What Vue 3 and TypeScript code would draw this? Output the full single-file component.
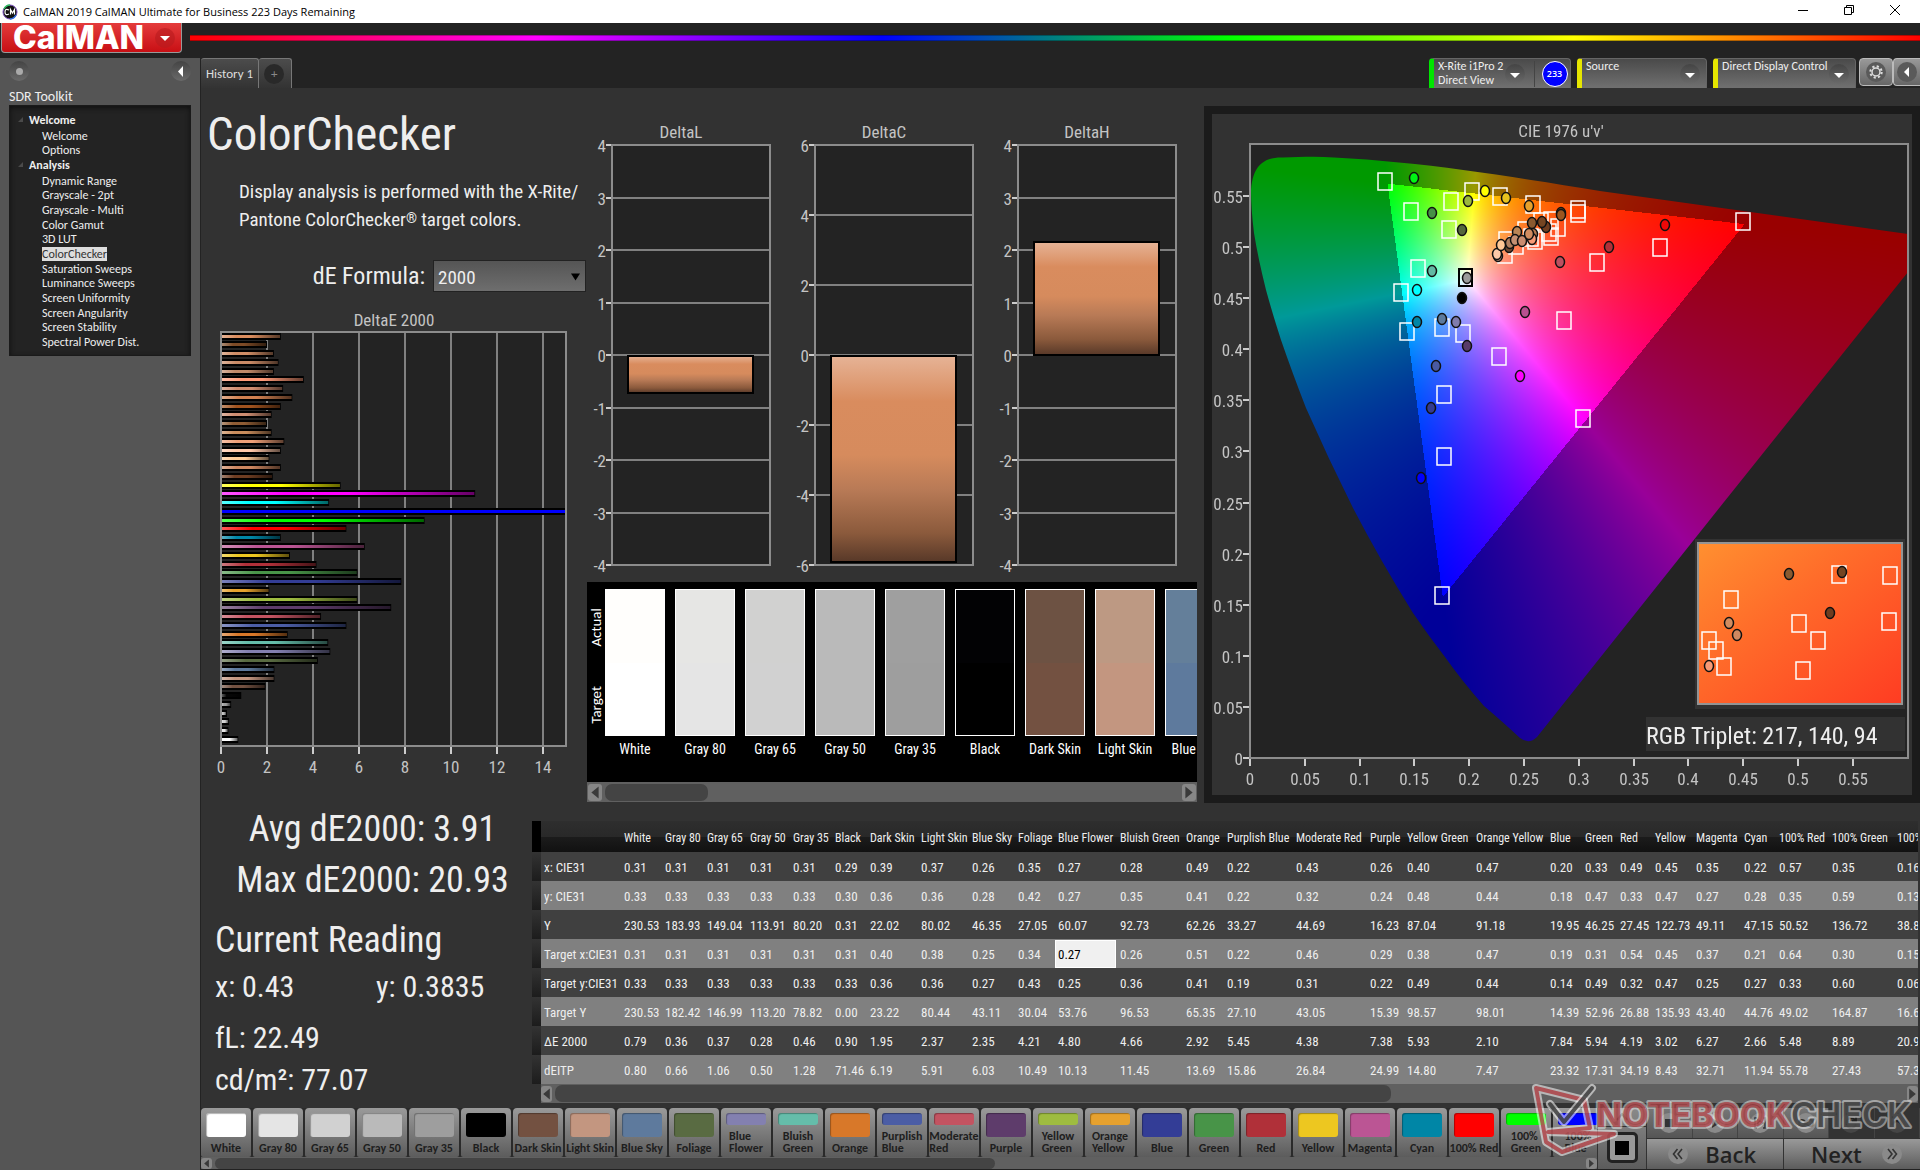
<script setup lang="ts">
import { onMounted, ref } from 'vue'

interface TreeItem { label: string; group?: boolean; active?: boolean }
interface Patch { name: string; color: string; actual?: string }
interface Dot { x: number; y: number; c: string }
interface DeltaChart { title: string; left: number; max: number; step: number; value: number }

const tree: TreeItem[] = [
  { label: 'Welcome', group: true },
  { label: 'Welcome' },
  { label: 'Options' },
  { label: 'Analysis', group: true },
  { label: 'Dynamic Range' },
  { label: 'Grayscale - 2pt' },
  { label: 'Grayscale - Multi' },
  { label: 'Color Gamut' },
  { label: '3D LUT' },
  { label: 'ColorChecker', active: true },
  { label: 'Saturation Sweeps' },
  { label: 'Luminance Sweeps' },
  { label: 'Screen Uniformity' },
  { label: 'Screen Angularity' },
  { label: 'Screen Stability' },
  { label: 'Spectral Power Dist.' },
]

const patches: Patch[] = [
  { name: 'White', color: '#ffffff', actual: '#fffefc' },
  { name: 'Gray 80', color: '#e5e5e5', actual: '#e6e6e4' },
  { name: 'Gray 65', color: '#d1d1d1', actual: '#d1d1d0' },
  { name: 'Gray 50', color: '#bababa', actual: '#bababa' },
  { name: 'Gray 35', color: '#9e9e9e', actual: '#9f9f9f' },
  { name: 'Black', color: '#000000', actual: '#020204' },
  { name: 'Dark Skin', color: '#735141', actual: '#6d5243' },
  { name: 'Light Skin', color: '#c39680', actual: '#bd9983' },
  { name: 'Blue Sky', color: '#5e7a9d', actual: '#647f9a' },
  { name: 'Foliage', color: '#596b42' },
  { name: 'Blue Flower', color: '#8380b0' },
  { name: 'Bluish Green', color: '#65bdaa' },
  { name: 'Orange', color: '#d87829' },
  { name: 'Purplish Blue', color: '#4b5da5' },
  { name: 'Moderate Red', color: '#c35361' },
  { name: 'Purple', color: '#5e3c6b' },
  { name: 'Yellow Green', color: '#9ebc40' },
  { name: 'Orange Yellow', color: '#e6a12e' },
  { name: 'Blue', color: '#333d96' },
  { name: 'Green', color: '#489448' },
  { name: 'Red', color: '#b03039' },
  { name: 'Yellow', color: '#edc720' },
  { name: 'Magenta', color: '#bb5594' },
  { name: 'Cyan', color: '#0086a6' },
  { name: '100% Red', color: '#ff0000' },
  { name: '100% Green', color: '#00ff00' },
  { name: '100% Blue', color: '#0000ff' },
]
const twoLine = ['Blue Flower', 'Bluish Green', 'Purplish Blue', 'Moderate Red', 'Yellow Green', 'Orange Yellow', '100% Green', '100% Blue']
const comparison = patches.slice(0, 9)

const columnWidths = [79, 41, 42, 43, 43, 42, 35, 51, 51, 46, 40, 62, 66, 41, 69, 74, 37, 69, 74, 35, 35, 35, 41, 48, 35, 53, 65, 65]
const rows: { label: string; cells: string[] }[] = [
  { label: 'x: CIE31', cells: '0.31 0.31 0.31 0.31 0.31 0.29 0.39 0.37 0.26 0.35 0.27 0.28 0.49 0.22 0.43 0.26 0.40 0.47 0.20 0.33 0.49 0.45 0.35 0.22 0.57 0.35 0.16'.split(' ') },
  { label: 'y: CIE31', cells: '0.33 0.33 0.33 0.33 0.33 0.30 0.36 0.36 0.28 0.42 0.27 0.35 0.41 0.22 0.32 0.24 0.48 0.44 0.18 0.47 0.33 0.47 0.27 0.28 0.35 0.59 0.13'.split(' ') },
  { label: 'Y', cells: '230.53 183.93 149.04 113.91 80.20 0.31 22.02 80.02 46.35 27.05 60.07 92.73 62.26 33.27 44.69 16.23 87.04 91.18 19.95 46.25 27.45 122.73 49.11 47.15 50.52 136.72 38.8'.split(' ') },
  { label: 'Target x:CIE31', cells: '0.31 0.31 0.31 0.31 0.31 0.31 0.40 0.38 0.25 0.34 0.27 0.26 0.51 0.22 0.46 0.29 0.38 0.47 0.19 0.31 0.54 0.45 0.37 0.21 0.64 0.30 0.15'.split(' ') },
  { label: 'Target y:CIE31', cells: '0.33 0.33 0.33 0.33 0.33 0.33 0.36 0.36 0.27 0.43 0.25 0.36 0.41 0.19 0.31 0.22 0.49 0.44 0.14 0.49 0.32 0.47 0.25 0.27 0.33 0.60 0.06'.split(' ') },
  { label: 'Target Y', cells: '230.53 182.42 146.99 113.20 78.82 0.00 23.22 80.44 43.11 30.04 53.76 96.53 65.35 27.10 43.05 15.39 98.57 98.01 14.39 52.96 26.88 135.93 43.40 44.76 49.02 164.87 16.6'.split(' ') },
  { label: 'ΔE 2000', cells: '0.79 0.36 0.37 0.28 0.46 0.90 1.95 2.37 2.35 4.21 4.80 4.66 2.92 5.45 4.38 7.38 5.93 2.10 7.84 5.94 4.19 3.02 6.27 2.66 5.48 8.89 20.93'.split(' ') },
  { label: 'dEITP', cells: '0.80 0.66 1.06 0.50 1.28 71.46 6.19 5.91 6.03 10.49 10.13 11.45 13.69 15.86 26.84 24.99 14.80 7.47 23.32 17.31 34.19 8.43 32.71 11.94 55.78 27.43 57.3'.split(' ') },
]
const isEditing = (r: number, c: number) => r === 3 && c === 10

// ΔE bars, listed from the top of the chart to the bottom
const deltaE: [number, string][] = [
  [2.6, '#d98c5e'], [2.0, '#7d4a26'], [2.3, '#cf8d66'], [2.5, '#c98a66'], [2.3, '#c08a6a'], [3.6, '#ff9a78'],
  [2.7, '#d08c70'], [3.1, '#d08050'], [2.6, '#a0521e'], [2.2, '#cf8e72'], [2.0, '#8f5c34'], [2.2, '#c88c5c'],
  [2.75, '#f0a078'], [2.6, '#ffc8aa'], [2.1, '#ffcc9a'], [2.6, '#cc8660'], [2.25, '#6e3d22'],
  [5.2, '#ffff00'], [11.05, '#ff00ff'], [4.7, '#00ffff'], [15, '#0000ff'], [8.85, '#00ff00'], [5.45, '#ff0000'],
  [2.6, '#0086a6'], [6.25, '#bb5594'], [3.0, '#edc720'], [4.15, '#b03039'], [5.93, '#489448'], [7.84, '#333d96'],
  [2.1, '#e6a12e'], [5.93, '#9ebc40'], [7.4, '#5e3c6b'], [4.35, '#c35361'], [5.45, '#4b5da5'], [2.9, '#d87829'],
  [4.66, '#65bdaa'], [4.75, '#8380b0'], [4.21, '#596b42'], [2.32, '#5e7a9d'], [2.32, '#c39680'], [1.93, '#735141'],
  [0.88, '#060606'], [0.44, '#9e9e9e'], [0.26, '#bababa'], [0.35, '#d1d1d1'], [0.32, '#e5e5e5'], [0.75, '#ffffff'],
]
const barTop = (i: number) => Math.floor(333 + i * 8.77)

const deltas: DeltaChart[] = [
  { title: 'DeltaL', left: 612, max: 4, step: 1, value: -0.72 },
  { title: 'DeltaC', left: 815, max: 6, step: 2, value: -5.92 },
  { title: 'DeltaH', left: 1018, max: 4, step: 1, value: 2.18 },
]
const ticksOf = (d: DeltaChart) => {
  const out: number[] = []
  for (let v = d.max; v >= -d.max; v -= d.step) out.push(v)
  return out
}
const yOf = (d: DeltaChart, v: number) => Math.round(355 - (v / d.max) * 210)

const axis = Array.from({ length: 12 }, (_, i) => i * 0.05)
const fmt = (v: number) => String(Number(v.toFixed(2)))
const uX = (u: number) => Math.round(1250 + u * 1096)
const vY = (v: number) => Math.round(758 - v * 1022)

const targets: [number, number][] = [
  [1385, 181], [1411, 211], [1451, 201], [1472, 191], [1449, 229], [1500, 196], [1533, 204], [1578, 209], [1578, 213],
  [1418, 268], [1401, 292], [1407, 331], [1442, 327], [1463, 333], [1499, 356], [1444, 394], [1444, 456],
  [1583, 418], [1564, 320], [1597, 262], [1660, 247], [1743, 221], [1442, 595],
  [1506, 240], [1505, 254], [1516, 245], [1525, 230], [1531, 237], [1535, 240], [1541, 221], [1549, 232], [1551, 236], [1551, 220], [1558, 227],
]
const readings: Dot[] = [
  { x: 1414, y: 178, c: '#00f514' }, { x: 1485, y: 191, c: '#ffff00' }, { x: 1506, y: 198, c: '#e8c41e' },
  { x: 1468, y: 201, c: '#9bb83c' }, { x: 1432, y: 213, c: '#469046' }, { x: 1462, y: 230, c: '#54683c' },
  { x: 1432, y: 271, c: '#62baa4' }, { x: 1417, y: 290, c: '#00ffff' }, { x: 1417, y: 322, c: '#0086a6' },
  { x: 1442, y: 319, c: '#5c7a9c' }, { x: 1456, y: 322, c: '#807cae' }, { x: 1462, y: 298, c: '#000000' },
  { x: 1467, y: 346, c: '#5a3c68' }, { x: 1436, y: 366, c: '#4a5aa2' }, { x: 1431, y: 408, c: '#343c90' },
  { x: 1421, y: 478, c: '#0000ff' }, { x: 1520, y: 376, c: '#ff00ff' }, { x: 1525, y: 312, c: '#b85090' },
  { x: 1665, y: 225, c: '#f00808' }, { x: 1609, y: 247, c: '#b03038' }, { x: 1560, y: 262, c: '#bc5060' },
  { x: 1529, y: 206, c: '#e6a12c' }, { x: 1498, y: 256, c: '#c9957a' }, { x: 1497, y: 254, c: '#ffc9a8' },
  { x: 1509, y: 247, c: '#6a452e' }, { x: 1501, y: 245, c: '#ffc896' }, { x: 1510, y: 243, c: '#b0805f' },
  { x: 1517, y: 232, c: '#b98556' }, { x: 1515, y: 240, c: '#c48f72' }, { x: 1522, y: 241, c: '#c98c70' },
  { x: 1533, y: 234, c: '#b87a50' }, { x: 1532, y: 239, c: '#f79a76' }, { x: 1529, y: 234, c: '#d18c60' },
  { x: 1532, y: 223, c: '#8a5a30' }, { x: 1546, y: 227, c: '#6e3d20' }, { x: 1542, y: 222, c: '#744522' },
  { x: 1561, y: 213, c: '#7a4a20' }, { x: 1561, y: 215, c: '#9c5620' },
]
const insetTargets: [number, number][] = [
  [1839, 574], [1890, 575], [1731, 599], [1799, 623], [1889, 621], [1709, 640], [1716, 650], [1724, 666], [1818, 640], [1803, 670],
]
const insetReadings: Dot[] = [
  { x: 1789, y: 574, c: '#8a5a30' }, { x: 1842, y: 572, c: '#744522' }, { x: 1830, y: 613, c: '#6e3d20' },
  { x: 1729, y: 623, c: '#d18c60' }, { x: 1737, y: 635, c: '#d08860' }, { x: 1709, y: 666, c: '#f79a76' },
]

const locus = ref<HTMLCanvasElement | null>(null)

// Chromaticity diagram: every pixel takes the brightest colour of its u'v' point;
// points outside the Rec.709 triangle are shown dimmed.
function paintLocus(canvas: HTMLCanvasElement) {
  const ox = 1212, oy = 114
  const ctx = canvas.getContext('2d')
  if (!ctx) return
  const w = canvas.width, h = canvas.height
  const layer = document.createElement('canvas')
  layer.width = w
  layer.height = h
  const lctx = layer.getContext('2d')
  if (!lctx) return
  const img = lctx.createImageData(w, h)
  for (let y = 0; y < h; y++) {
    for (let x = 0; x < w; x++) {
      const u = (x + ox - 1250) / 1096
      const v = Math.max(0.005, (758 - (y + oy)) / 1022)
      const X = (9 * u) / (4 * v)
      const Z = (12 - 3 * u - 20 * v) / (4 * v)
      let r = 3.2406 * X - 1.5372 - 0.4986 * Z
      let g = -0.9689 * X + 1.8758 + 0.0415 * Z
      let b = 0.0557 * X - 0.204 + 1.057 * Z
      const outside = Math.min(r, g, b) < 0
      r = Math.max(0, r)
      g = Math.max(0, g)
      b = Math.max(0, b)
      const m = Math.max(r, g, b) || 1
      const k = outside ? 153 : 255
      const i = (y * w + x) * 4
      img.data[i] = (r / m) * k
      img.data[i + 1] = (g / m) * k
      img.data[i + 2] = (b / m) * k
      img.data[i + 3] = 255
    }
  }
  lctx.putImageData(img, 0, 0)
  ctx.fillStyle = '#232323'
  ctx.fillRect(38, 30, 658, 614)
  ctx.save()
  ctx.beginPath()
  ctx.rect(38, 30, 658, 614)
  ctx.clip()
  ctx.clip(new Path2D('M39 76C41 52 51 43 71 43.500C88 43 104 42 122 43.500C210 48 290 61 388 77L696 120V158L512 388L325 623Q317 631 308 624Q292 609 272 592Q250 567 233 543Q216 521 201 499Q168 446 141 394Q116 344 94 294Q80 258 69 226Q60 198 54 176Q46 144 42 119Q39 95 39 76Z'))
  ctx.drawImage(layer, 0, 0)
  ctx.restore()
}
onMounted(() => { if (locus.value) paintLocus(locus.value) })
</script>

<template>
  <div class="app">
    <header class="titlebar">
      <svg class="app-icon" viewBox="0 0 16 16" aria-hidden="true">
        <circle cx="8" cy="8" r="7" fill="#111" stroke="#7a4fc0" stroke-width="1" />
        <path d="M2 5A7 7 0 0 1 8 1" stroke="#2fc060" stroke-width="1.500" fill="none" />
        <path d="M14 11A7 7 0 0 1 8 15" stroke="#3070e0" stroke-width="1.500" fill="none" />
        <path d="M7 6Q3 4 3 8T7 10M8.500 10.500V5.500L10.500 9L12.500 5.500V10.500" stroke="#fff" stroke-width="1.200" fill="none" />
      </svg>
      <span class="window-title">CalMAN 2019 CalMAN Ultimate for Business 223 Days Remaining</span>
      <div class="window-buttons">
        <button type="button" aria-label="Minimize"><svg viewBox="0 0 12 12"><path d="M1 6.500H11" /></svg></button>
        <button type="button" aria-label="Restore"><svg viewBox="0 0 12 12"><path d="M1.500 3.500H8.500V10.500H1.500ZM3.500 3.500V1.500H10.500V8.500H8.500" /></svg></button>
        <button type="button" aria-label="Close"><svg viewBox="0 0 12 12"><path d="M1 1L11 11M11 1L1 11" /></svg></button>
      </div>
    </header>

    <div class="brandbar">
      <button type="button" class="logo">
        <span>CalMAN</span>
        <svg viewBox="0 0 20 20" aria-hidden="true"><circle cx="10" cy="10" r="10" fill="#b81a1e" opacity=".6" /><path d="M5 8H15L10 13Z" fill="#fff" /></svg>
      </button>
      <div class="rainbow"></div>
    </div>

    <div class="shell">
      <aside class="sidebar">
        <div class="side-top">
          <button type="button" class="knob" aria-label="Pin"><i></i></button>
          <button type="button" class="knob" aria-label="Collapse"><svg viewBox="0 0 20 20"><path d="M12 5V16L7 10.500Z" fill="#fff" /></svg></button>
        </div>
        <h2>SDR Toolkit</h2>
        <ul class="tree">
          <li v-for="(t, i) in tree" :key="i" :class="{ group: t.group }">
            <svg v-if="t.group" viewBox="0 0 6 6" aria-hidden="true"><path d="M5 0V5H0Z" fill="#4a4a4a" /></svg>
            <a href="#" :class="{ active: t.active }">{{ t.label }}</a>
          </li>
        </ul>
      </aside>

      <main class="main">
        <div class="strip">
          <div class="tabs">
            <button type="button" class="tab">History 1</button>
            <button type="button" class="tab add" aria-label="Add history"><span>+</span></button>
          </div>
          <div class="devices">
            <div class="device meter">
              <p>X-Rite i1Pro 2<br>Direct View</p>
              <button type="button" class="drop" aria-label="Meter menu"><svg viewBox="0 0 20 20"><path d="M5 9H15L10 14Z" fill="#fff" /></svg></button>
              <span class="count">233</span>
            </div>
            <div class="device source">
              <p>Source</p>
              <button type="button" class="drop" aria-label="Source menu"><svg viewBox="0 0 20 20"><path d="M5 9H15L10 14Z" fill="#fff" /></svg></button>
            </div>
            <div class="device display">
              <p>Direct Display Control</p>
              <button type="button" class="drop" aria-label="Display menu"><svg viewBox="0 0 20 20"><path d="M5 9H15L10 14Z" fill="#fff" /></svg></button>
            </div>
            <button type="button" class="tool" aria-label="Settings">
              <svg viewBox="0 0 20 20"><circle cx="10" cy="10" r="10" fill="#5a5a5a" /><circle cx="10" cy="10" r="4" fill="none" stroke="#ddd" stroke-width="1.500" /><circle cx="10" cy="10" r="5.700" fill="none" stroke="#ddd" stroke-width="2" stroke-dasharray="2.200 2.277" /></svg>
            </button>
            <button type="button" class="tool" aria-label="Hide panel">
              <svg viewBox="0 0 20 20"><circle cx="10" cy="10" r="10" fill="#5a5a5a" /><path d="M12 5V15L7 10Z" fill="#fff" /></svg>
            </button>
          </div>
        </div>

        <div class="upper">
          <section class="intro">
            <h1>ColorChecker</h1>
            <p>Display analysis is performed with the X-Rite/<br>Pantone ColorChecker<sup>®</sup> target colors.</p>
            <div class="formula">
              <label for="formula">dE Formula:</label>
              <div class="select">
                <select id="formula"><option>2000</option></select>
                <svg viewBox="0 0 10 8" aria-hidden="true"><path d="M0 0H10L5 8Z" /></svg>
              </div>
            </div>
            <svg class="chart" viewBox="201 300 386 490" role="img" aria-label="DeltaE 2000">
              <defs>
                <linearGradient id="barShade" x1="0" x2="1" y1="0" y2="0">
                  <stop offset="0" stop-color="#fff" stop-opacity=".35" />
                  <stop offset=".25" stop-color="#fff" stop-opacity="0" />
                  <stop offset=".5" stop-color="#000" stop-opacity="0" />
                  <stop offset="1" stop-color="#000" stop-opacity=".6" />
                </linearGradient>
              </defs>
              <text x="394" y="326" text-anchor="middle" class="lab">DeltaE 2000</text>
              <rect x="221" y="332" width="345" height="414" fill="#232323" />
              <g v-for="n in 8" :key="n">
                <path :d="`M${221 + (n - 1) * 46} 332V746`" class="grid" />
                <path :d="`M${221 + (n - 1) * 46} 747V754`" class="tick" />
                <text :x="221 + (n - 1) * 46" y="773" text-anchor="middle" class="lab">{{ (n - 1) * 2 }}</text>
              </g>
              <g v-for="(b, i) in deltaE" :key="i">
                <rect x="221" :y="barTop(i)" :width="b[0] * 23" height="7" fill="#000" />
                <rect x="222" :y="barTop(i) + 2" :width="b[0] * 23 - 2" height="3" :fill="b[1]" />
                <rect x="222" :y="barTop(i) + 2" :width="b[0] * 23 - 2" height="3" :fill="i === 20 ? 'none' : 'url(#barShade)'" />
              </g>
              <rect x="221" y="332" width="345" height="414" class="frame" />
            </svg>
          </section>

          <section class="middle">
            <svg class="chart" viewBox="587 110 610 472" role="img" aria-label="DeltaL, DeltaC and DeltaH">
              <defs>
                <linearGradient id="skin" x1="0" x2="0" y1="0" y2="1">
                  <stop offset="0" stop-color="#e6b396" />
                  <stop offset=".22" stop-color="#d98c5e" />
                  <stop offset=".48" stop-color="#d68b5d" />
                  <stop offset=".65" stop-color="#b87a56" />
                  <stop offset=".86" stop-color="#8b5a3c" />
                  <stop offset="1" stop-color="#573828" />
                </linearGradient>
              </defs>
              <g v-for="d in deltas" :key="d.title">
                <text :x="d.left + 69" y="138" text-anchor="middle" class="lab">{{ d.title }}</text>
                <rect :x="d.left" y="145" width="158" height="420" fill="#232323" />
                <g v-for="t in ticksOf(d)" :key="t">
                  <path :d="`M${d.left} ${yOf(d, t)}h158`" class="grid" />
                  <path :d="`M${d.left - 6} ${yOf(d, t)}h6`" class="tick" />
                  <text :x="d.left - 6" :y="yOf(d, t) + 7" text-anchor="end" class="lab">{{ t }}</text>
                </g>
                <rect :x="d.left" y="145" width="158" height="420" class="frame" />
                <rect :x="d.left + 16" :y="Math.min(yOf(d, 0), yOf(d, d.value)) + 1" width="125" :height="Math.abs(yOf(d, 0) - yOf(d, d.value)) - 1" fill="url(#skin)" stroke="#000" stroke-width="2" />
              </g>
            </svg>
            <div class="compare">
              <div class="side-labels"><span>Actual</span><span>Target</span></div>
              <figure v-for="p in comparison" :key="p.name">
                <div class="pair"><i :style="{ background: p.actual }"></i><i :style="{ background: p.color }"></i></div>
                <figcaption>{{ p.name }}</figcaption>
              </figure>
            </div>
            <div class="scroll tall">
              <button type="button" aria-label="Scroll left"><svg viewBox="0 0 10 14"><path d="M8 2V12L2 7Z" /></svg></button>
              <span class="track"><i style="width: 18%"></i></span>
              <button type="button" aria-label="Scroll right"><svg viewBox="0 0 10 14"><path d="M2 2V12L8 7Z" /></svg></button>
            </div>
          </section>

          <section class="cie">
            <canvas ref="locus" width="700" height="681"></canvas>
            <svg viewBox="1212 114 700 681" role="img" aria-label="CIE 1976 u'v' chart">
              <defs>
                <linearGradient id="zoomed" x1="0" y1="0" x2="1" y2="1">
                  <stop offset="0" stop-color="#ff9030" />
                  <stop offset=".4" stop-color="#ff6c2a" />
                  <stop offset="1" stop-color="#ff3c22" />
                </linearGradient>
              </defs>
              <text x="1561" y="137" text-anchor="middle" class="lab">CIE 1976 u'v'</text>
              <rect x="1250" y="144" width="658" height="614" class="frame" />
              <g v-for="a in axis" :key="a">
                <path :d="`M${uX(a)} 759v7M1243 ${vY(a)}h6`" class="tick" />
                <text :x="uX(a)" y="785" text-anchor="middle" class="lab">{{ fmt(a) }}</text>
                <text x="1243" :y="vY(a) + 7" text-anchor="end" class="lab">{{ fmt(a) }}</text>
              </g>
              <rect v-for="(t, i) in targets" :key="'t' + i" :x="t[0] - 7" :y="t[1] - 8" width="14" height="17" class="target" />
              <rect x="1459" y="269" width="13" height="17" fill="none" stroke="#000" stroke-width="2" />
              <ellipse v-for="(r, i) in readings" :key="'r' + i" :cx="r.x" :cy="r.y" rx="4.500" ry="5.500" :fill="r.c" class="dot" />
              <ellipse cx="1467" cy="278" rx="4.500" ry="5.500" fill="#9b9b9b" class="dot" />
              <rect x="1695" y="539" width="210" height="170" fill="#323232" />
              <rect x="1698" y="543" width="204" height="161" fill="url(#zoomed)" stroke="#949494" stroke-width="2" />
              <rect v-for="(t, i) in insetTargets" :key="'it' + i" :x="t[0] - 7" :y="t[1] - 8" width="14" height="17" class="target" />
              <ellipse v-for="(r, i) in insetReadings" :key="'ir' + i" :cx="r.x" :cy="r.y" rx="4.500" ry="5.500" :fill="r.c" class="dot" />
              <rect x="1646" y="717" width="259" height="34" fill="#323232" />
              <text x="1646" y="744" class="triplet">RGB Triplet: 217, 140, 94</text>
            </svg>
          </section>
        </div>

        <div class="lower">
          <section class="stats">
            <p class="big">Avg dE2000: 3.91</p>
            <p class="big">Max dE2000: 20.93</p>
            <h3>Current Reading</h3>
            <p class="xy"><span>x: 0.43</span><span>y: 0.3835</span></p>
            <p>fL: 22.49</p>
            <p>cd/m²: 77.07</p>
          </section>
          <section class="data">
            <div class="handles"><i v-for="n in 9" :key="n"></i></div>
            <div class="table-box">
              <div class="clip">
                <table>
                  <colgroup><col v-for="(w, i) in columnWidths" :key="i" :style="{ width: w + 'px' }"></colgroup>
                  <thead>
                    <tr><th></th><th v-for="p in patches" :key="p.name" scope="col">{{ p.name }}</th></tr>
                  </thead>
                  <tbody>
                    <tr v-for="(r, ri) in rows" :key="r.label">
                      <th scope="row">{{ r.label }}</th>
                      <td v-for="(c, ci) in r.cells" :key="ci" :class="{ editing: isEditing(ri, ci) }">
                        <input v-if="isEditing(ri, ci)" type="text" :value="c" aria-label="Target x:CIE31, Blue Flower">
                        <template v-else>{{ c }}</template>
                      </td>
                    </tr>
                  </tbody>
                </table>
              </div>
              <div class="scroll">
                <button type="button" aria-label="Scroll left"><svg viewBox="0 0 10 14"><path d="M8 2V12L2 7Z" /></svg></button>
                <span class="track"><i style="width: 62%"></i></span>
                <button type="button" aria-label="Scroll right"><svg viewBox="0 0 10 14"><path d="M2 2V12L8 7Z" /></svg></button>
              </div>
            </div>
          </section>
        </div>

        <footer class="bottom">
          <div class="patches">
            <div class="patch-row">
              <button v-for="p in patches" :key="p.name" type="button" class="patch">
                <i :class="{ half: twoLine.includes(p.name) }" :style="{ background: p.color }"></i>
                <span v-if="twoLine.includes(p.name)">{{ p.name.split(' ')[0] }}<br>{{ p.name.split(' ')[1] }}</span>
                <span v-else>{{ p.name }}</span>
              </button>
            </div>
            <div class="scroll thin">
              <button type="button" aria-label="Scroll left"><svg viewBox="0 0 10 14"><path d="M8 2V12L2 7Z" /></svg></button>
              <span class="track"><i style="width: 57%"></i></span>
              <button type="button" aria-label="Scroll right"><svg viewBox="0 0 10 14"><path d="M2 2V12L8 7Z" /></svg></button>
            </div>
          </div>
          <div class="window-size">
            <button type="button" class="up" aria-label="More"><svg viewBox="0 0 20 16"><path d="M5 11L10 5L15 11" fill="none" stroke="#333" stroke-width="2" /></svg></button>
            <button type="button" class="square" aria-label="Pattern window"><i></i></button>
          </div>
          <div class="transport">
            <div class="controls">
              <button type="button" aria-label="Stop"><svg viewBox="0 0 20 20"><circle cx="10" cy="10" r="10" /><path d="M6 6H14V14H6Z" fill="#333" /></svg></button>
              <button type="button" aria-label="Play"><svg viewBox="0 0 20 20"><circle cx="10" cy="10" r="10" /><path d="M7 5L15 10L7 15Z" fill="#333" /></svg></button>
              <button type="button" aria-label="Read series"><svg viewBox="0 0 20 20"><circle cx="10" cy="10" r="10" /><path d="M7 5H5V15H7M13 5H15V15H13M8 7L13 10L8 13Z" fill="none" stroke="#333" stroke-width="1.500" /></svg></button>
              <button type="button" aria-label="Read continuously"><svg viewBox="0 0 20 20"><circle cx="10" cy="10" r="10" /><path d="M10 10C7 5 3 7 3 10S7 15 10 10S17 7 17 10S13 15 10 10Z" fill="none" stroke="#333" stroke-width="1.800" /></svg></button>
              <button type="button" class="off" aria-label="Refresh"><svg viewBox="0 0 20 20"><circle cx="10" cy="10" r="10" /><path d="M14 7A5 5 0 1 0 15 11M15 4V8H11" fill="none" stroke="#222" stroke-width="1.800" /></svg></button>
              <button type="button" class="off" aria-label="Auto"><svg viewBox="0 0 20 20"><circle cx="10" cy="10" r="10" /><path d="M5 12Q10 4 15 12" fill="none" stroke="#222" stroke-width="1.800" /></svg></button>
            </div>
            <div class="pager">
              <button type="button"><svg viewBox="0 0 20 20"><circle cx="10" cy="10" r="10" /><path d="M9.500 5L5.500 10L9.500 15M14 5L10 10L14 15" fill="none" stroke="#333" stroke-width="1.600" /></svg>Back</button>
              <button type="button">Next<svg viewBox="0 0 20 20"><circle cx="10" cy="10" r="10" /><path d="M6 5L10 10L6 15M10.500 5L14.500 10L10.500 15" fill="none" stroke="#333" stroke-width="1.600" /></svg></button>
            </div>
          </div>
          <svg class="watermark" viewBox="0 0 390 80" aria-label="NOTEBOOKCHECK">
            <g fill="none" stroke-linejoin="round" stroke-linecap="round">
              <path d="M8 10L56 22L62 50L20 54L86 56L34 74L18 64Z" stroke="#fff" stroke-opacity=".55" stroke-width="8" />
              <path d="M8 10L56 22L62 50L20 54L86 56L34 74L18 64Z" stroke="#a8282e" stroke-opacity=".7" stroke-width="4" />
              <path d="M22 26L36 44L64 10" stroke="#fff" stroke-opacity=".55" stroke-width="8" />
              <path d="M22 26L36 44L64 10" stroke="#333" stroke-opacity=".8" stroke-width="4" />
            </g>
            <g class="wm-text">
              <text x="68" y="49" class="wm-red">NOTEBOOK</text>
              <text x="383" y="49" text-anchor="end" class="wm-dark">CHECK</text>
            </g>
          </svg>
        </footer>
      </main>
    </div>
  </div>
</template>

<style>
body { margin: 0; background: #323232; }
</style>

<style scoped>
.app { --narrow: "Roboto Condensed", Carlito, "Liberation Sans", sans-serif; --ui: Carlito, Lato, sans-serif; display: flex; flex-direction: column; min-height: 100vh; overflow: hidden; background: #232323; color: #eee; font-family: var(--ui); font-size: 12px; }
.app *, .app *::before { box-sizing: border-box; }
button { margin: 0; padding: 0; border: 0; background: none; font: inherit; color: inherit; }
h1, h2, h3, p, ul, figure { margin: 0; padding: 0; font-weight: 400; }
svg { display: block; }

.titlebar { display: flex; align-items: center; height: 23px; padding: 0 2px; background: #fff; color: #000; font-family: "Open Sans", "Noto Sans", sans-serif; font-size: 11px; line-height: 18px; }
.app-icon { width: 16px; height: 16px; margin-right: 5px; }
.window-title { align-self: flex-start; padding-top: 3px; }
.window-buttons { display: flex; align-self: flex-start; margin-left: auto; }
.window-buttons button { width: 46px; height: 20px; display: grid; place-items: center; }
.window-buttons svg { width: 12px; height: 12px; fill: none; stroke: #000; stroke-width: 1; }

.brandbar { display: flex; align-items: flex-start; gap: 8px; height: 35px; padding-left: 1px; }
.logo { display: flex; align-items: center; justify-content: space-between; width: 181px; height: 30px; padding: 0 6px 0 11px; border: 1px solid #999; border-top: 0; border-radius: 0 0 4px 4px; background: linear-gradient(#e43c3c, #c80f14); color: #fff; font: 800 32px/28px Inter, sans-serif; }
.logo svg { width: 20px; height: 20px; }
.rainbow { flex: 1; height: 6px; margin-top: 12px; border: 1px solid rgba(0, 0, 0, .3); border-width: 1px 0; background: linear-gradient(90deg, #f00, #f0f 20%, #00f 40%, #0f0 60%, #ff0 80%, #f00); }

.shell { flex: 1; display: grid; grid-template-columns: 200px minmax(0, 1fr); }
.sidebar { padding: 0 9px; background: #555; }
.side-top { display: flex; justify-content: space-between; padding-top: 3px; height: 30px; }
.knob { display: grid; place-items: center; width: 20px; height: 20px; border-radius: 50%; background: linear-gradient(#444, #6a6a6a); }
.knob i { width: 7px; height: 7px; border-radius: 50%; background: #aaa; }
.knob svg { width: 20px; height: 20px; }
.sidebar h2 { font-size: 14px; line-height: 17px; }
.tree { display: flex; flex-direction: column; justify-content: space-between; height: 251px; padding: 7px 0 6px; border: 1px solid #1a1a1a; background: #232323; list-style: none; box-shadow: inset 0 2px 5px #111; }
.tree li { display: flex; align-items: center; height: 14px; padding-left: 32px; line-height: 14px; }
.tree li.group { gap: 5px; padding-left: 8px; margin-bottom: 1px; font-weight: 700; }
.tree svg { width: 6px; height: 6px; }
.tree a { color: #eee; text-decoration: none; }
.tree a.active { background: #ddd; color: #333; }

.main { min-width: 0; display: flex; flex-direction: column; border-left: 1px solid #232323; background: #323232; }
.strip { display: flex; justify-content: space-between; height: 30px; background: #232323; }
.tabs { display: flex; }
.tab { height: 30px; padding: 0 5px; border: 1px solid #777; border-width: 1px 1px 0 0; border-radius: 3px 3px 0 0; background: linear-gradient(#4c4c4c, #333); color: #ddd; font-size: 13px; }
.tab.add { width: 33px; }
.tab.add span { display: block; width: 20px; height: 20px; border-radius: 50%; background: #292929; color: #888; line-height: 20px; }
.devices { display: flex; }
.device { display: flex; align-items: center; height: 30px; margin-right: 6px; border: 1px solid #666; border-bottom: 0; border-left: 5px solid #e6e600; border-radius: 4px 4px 0 0; background: linear-gradient(#4a4a4a, #707070); font-size: 12px; line-height: 14px; }
.device p { align-self: flex-start; flex: 1; min-width: 0; padding-left: 4px; white-space: nowrap; }
.device.meter { width: 142px; border-left-color: #00e600; }
.device.source { width: 130px; }
.device.display { width: 143px; margin-right: 3px; }
.drop { flex: none; width: 20px; height: 20px; margin-right: 6px; border-radius: 50%; background: linear-gradient(#444, #6a6a6a); }
.meter .drop { margin-right: 9px; }
.count { flex: none; width: 36px; height: 26px; padding-left: 4px; border-left: 1px solid #444; display: grid; place-items: center; position: relative; z-index: 0; color: #fff; font-family: "Open Sans", sans-serif; font-size: 9px; font-weight: 600; }
.count::before { content: ""; position: absolute; z-index: -1; left: 7px; top: 0; width: 26px; height: 26px; border: 1px solid #fff; border-radius: 50%; background: #00f; }
.tool { display: grid; place-items: center; width: 34px; height: 28px; border: 1px solid #bbb; border-radius: 4px; background: linear-gradient(#999, #666); }
.tool:last-child { width: 27px; border-right: 0; border-radius: 4px 0 0 4px; }
.tool svg { width: 20px; height: 20px; }

.upper { display: grid; grid-template-columns: minmax(0, 386fr) minmax(0, 610fr) minmax(0, 723fr); }
.lab { fill: #c4c4c4; font-family: var(--narrow); font-size: 17px; }
.grid { stroke: #808080; stroke-width: 2; fill: none; }
.tick { stroke: #ccc; stroke-width: 2; fill: none; }
.frame { stroke: #8c8c8c; stroke-width: 2; fill: none; }
.chart { width: 100%; height: auto; }
.intro { padding-top: 18px; font-family: var(--narrow); }
.intro h1 { padding-left: 6px; font-size: 47px; line-height: 55px; }
.intro p { margin-top: 17px; padding-left: 38px; font-size: 19px; line-height: 28px; white-space: nowrap; }
.intro sup { font-size: 14px; line-height: 0; vertical-align: 3px; }
.formula { display: flex; justify-content: flex-end; align-items: center; gap: 8px; height: 32px; margin: 26px 1px 8px 0; font-size: 24px; }
.select { position: relative; width: 153px; height: 32px; }
.select select { appearance: none; width: 100%; height: 100%; padding: 4px 4px 2px; border: 1px solid #222; border-radius: 0; background: linear-gradient(#555, #6e6e6e); color: #eee; font-family: var(--narrow); font-size: 19px; }
.select svg { position: absolute; right: 6px; top: 13px; width: 9px; height: 8px; }

.middle { padding-top: 22px; }
.compare { display: flex; height: 200px; padding-top: 7px; overflow: hidden; background: #000; color: #fff; }
.side-labels { flex: none; display: flex; flex-direction: column; justify-content: space-around; align-items: center; width: 18px; height: 154px; font-size: 15px; line-height: 16px; }
.side-labels span { writing-mode: vertical-rl; transform: rotate(180deg); }
.compare figure { flex: none; width: 60px; margin-right: 10px; }
.pair { height: 147px; border: 1px solid #fff; display: flex; flex-direction: column; }
.pair i { flex: 1; }
.compare figcaption { font-family: var(--narrow); font-size: 14px; line-height: 26px; text-align: center; white-space: nowrap; }

.scroll { display: flex; align-items: center; height: 19px; gap: 3px; background: #606060; }
.scroll button { flex: none; width: 11px; height: 16px; border-radius: 3px; background: #868686; }
.scroll button svg { width: 100%; height: 100%; fill: #3a3a3a; }
.track { flex: 1; height: 17px; display: flex; }
.track i { border-radius: 7px; background: #444; }
.scroll.tall { height: 20px; padding: 0 1px; }
.scroll.tall button { width: 14px; height: 17px; }
.scroll.thin { height: 12px; }
.scroll.thin button { height: 11px; }
.scroll.thin .track { height: 11px; }

.cie { position: relative; margin: 18px 0 0 7px; border: 8px solid #1b1b1b; background: #323232; }
.cie svg { position: relative; width: 100%; height: auto; }
.cie canvas { position: absolute; left: 0; top: 0; width: 100%; height: auto; }
.target { fill: none; stroke: #fff; stroke-width: 1.5px; }
.dot { stroke: #111; stroke-width: 1.5px; }
.triplet { fill: #eee; font-family: var(--narrow); font-size: 24px; }

.lower { display: grid; grid-template-columns: 331px minmax(0, 1fr); }
.stats { padding: 1px 2px 0 14px; font-family: var(--narrow); font-size: 30px; line-height: 42px; white-space: nowrap; }
.stats .big { font-size: 36px; line-height: 51px; text-align: center; }
.stats h3 { margin: 11px 0 3px; font-size: 36px; line-height: 46px; }
.stats .xy { display: flex; margin-bottom: 9px; }
.stats .xy span:first-child { width: 161px; }
.data { display: flex; min-width: 0; margin: 18px 2px 0 0; font-family: var(--narrow); }
.handles { flex: none; width: 9px; }
.handles i { display: block; height: 29px; background: linear-gradient(#333, #1c1c1c); }
.handles i:first-child { height: 31px; background: #000; }
.table-box { flex: 1; min-width: 0; }
.clip { overflow: hidden; }
table { width: 1417px; table-layout: fixed; border-collapse: collapse; }
th, td { height: 29px; padding: 2px 0 0 4px; font-size: 13px; font-weight: 400; line-height: 16px; text-align: left; white-space: nowrap; }
tbody th { padding-left: 3px; }
thead th { height: 31px; font-size: 12px; }
thead tr { background: linear-gradient(#2e2e2e, #292929 50%, #1c1c1c 50%, #111); }
tbody tr { background: #404040; }
tbody tr:nth-child(even) { background: #808080; }
td.editing { padding: 0 0 0 1px; }
td input { display: block; width: 61px; height: 28px; padding: 2px 2px 0; border: 1px solid #fff; background: #f0f0f0; color: #000; font: 13px/16px var(--narrow); }

.bottom { position: relative; display: grid; grid-template-columns: minmax(0, 1fr) 48px 273px; gap: 1px; height: 62px; margin-top: 5px; border-bottom: 1px solid #222; }
.patch-row { display: flex; gap: 2px; height: 49px; overflow: hidden; background: #2a2a2a; }
.patch { flex: none; display: flex; flex-direction: column; align-items: center; justify-content: space-between; width: 50px; height: 49px; padding: 5px 0 3px; border-radius: 4px 4px 2px 2px; background: linear-gradient(#9a9a9a, #5c5c5c); color: #1e1e1e; font-size: 12px; font-weight: 700; line-height: 12px; text-align: left; white-space: nowrap; }
.patch i { flex: none; width: 40px; height: 24px; border-radius: 3px; box-shadow: inset 1px 1px 1px rgba(0, 0, 0, .3); }
.patch i.half { height: 12px; }
.window-size { display: flex; flex-direction: column; align-items: center; gap: 5px; background: linear-gradient(#8a8a8a, #5c5c5c); }
.up { width: 100%; height: 19px; border-bottom: 1px solid #333; }
.up svg { width: 20px; height: 16px; margin: 0 auto; }
.square { display: grid; place-items: center; width: 31px; height: 31px; border: 3px solid #222; border-radius: 5px; background: #999; }
.square i { width: 14px; height: 14px; background: #000; }
.controls { display: grid; grid-template-columns: repeat(6, 1fr); height: 30px; margin-bottom: 1px; }
.controls button { display: grid; place-items: center; border-right: 1px solid #444; background: linear-gradient(#777, #555); }
.controls svg, .pager svg { width: 20px; height: 20px; fill: #8a8a8a; }
.controls .off { background: #333; }
.controls .off svg { fill: #454545; }
.pager { display: grid; grid-template-columns: 1fr 1fr; gap: 1px; height: 30px; }
.pager button { display: flex; align-items: center; justify-content: space-between; padding: 0 27px 0 21px; background: linear-gradient(#999, #5c5c5c); color: #222; font: 600 22px/30px "Open Sans", "Noto Sans", sans-serif; }
.pager button:last-child { padding: 0 18px 0 27px; }
.watermark { position: absolute; right: 2px; bottom: 11px; width: 390px; height: 80px; }
.wm-text { font-family: Inter, sans-serif; font-size: 34px; paint-order: stroke; stroke: rgba(255, 255, 255, .45); stroke-width: 4px; stroke-linejoin: round; }
.wm-red { fill: rgba(170, 64, 68, .8); font-weight: 800; }
.wm-dark { fill: rgba(60, 60, 60, .85); font-weight: 600; }
</style>
